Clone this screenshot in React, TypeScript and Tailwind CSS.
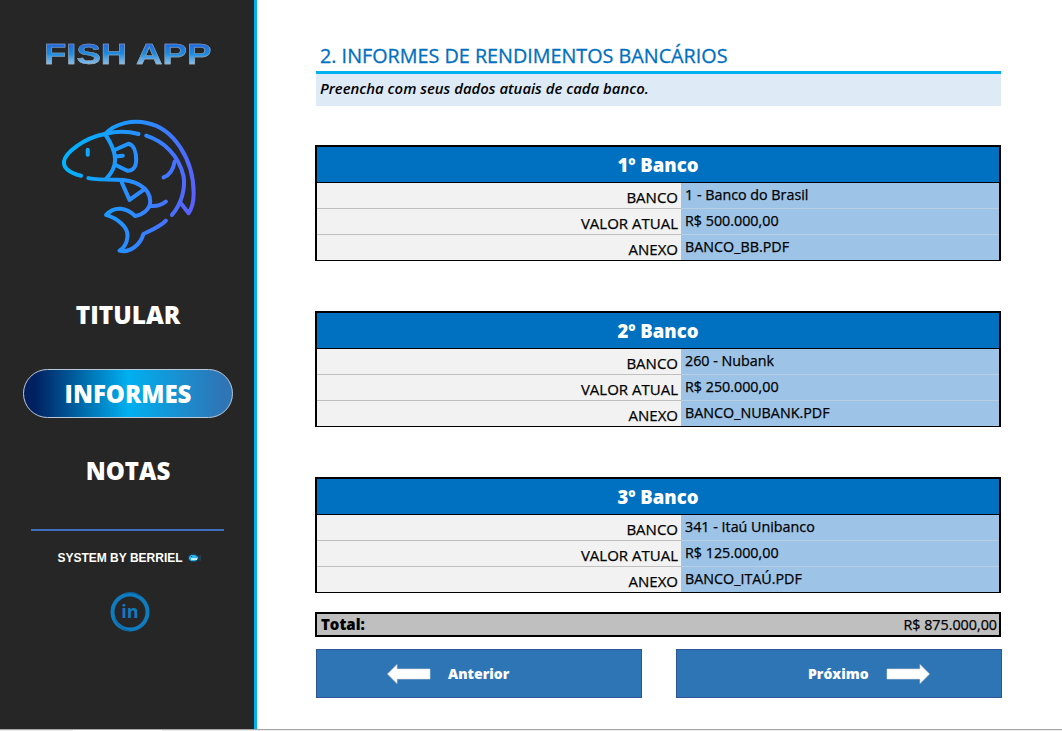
import React from 'react'

const openSans = { fontFamily: '"Open Sans", "Noto Sans", sans-serif' }

const bancos = [
  { titulo: '1º Banco', banco: '1 - Banco do Brasil', valor: 'R$ 500.000,00', anexo: 'BANCO_BB.PDF' },
  { titulo: '2º Banco', banco: '260 - Nubank', valor: 'R$ 250.000,00', anexo: 'BANCO_NUBANK.PDF' },
  { titulo: '3º Banco', banco: '341 - Itaú Unibanco', valor: 'R$ 125.000,00', anexo: 'BANCO_ITAÚ.PDF' },
]

function FishLogo() {
  return (
    <svg viewBox="180 355 410 410" className="w-[137px] h-[137px]" fill="none" stroke="url(#fishGrad)" strokeWidth="12" strokeLinecap="round" strokeLinejoin="round">
      <defs>
        <linearGradient id="fishGrad" gradientUnits="userSpaceOnUse" x1="190" y1="500" x2="590" y2="560">
          <stop offset="0" stopColor="#00b4ff" />
          <stop offset="0.55" stopColor="#2a8cff" />
          <stop offset="1" stopColor="#5a60ff" />
        </linearGradient>
      </defs>
      <path d="M243 528C205 518 190 503 192 485C195 460 250 415 315 403" />
      <path d="M315 403C345 370 400 360 440 370C520 385 580 480 580 580C580 605 575 625 565 640L540 608" />
      <path d="M315 403C345 395 385 395 415 403" />
      <path d="M438 408C490 425 535 465 550 530C555 565 545 610 515 645" />
      <path d="M490 533C510 525 520 505 523 485" />
      <path d="M315 403C330 425 345 455 345 480C345 500 335 520 318 537" />
      <path d="M265 535C290 540 320 540 350 540C400 540 450 560 450 605C450 630 425 645 405 648C380 625 345 615 318 645C350 655 385 680 382 710C380 730 370 745 358 752C390 760 420 735 430 702C450 692 480 680 497 662" />
      <path d="M345 450L385 432C400 435 408 455 408 480C408 505 395 515 380 512L345 495" />
      <path d="M345 470L368 468" />
      <path d="M263 450L263 465" />
      <path d="M365 548L388 600L430 570" />
      <path d="M450 618C470 620 485 615 497 605" />
    </svg>
  )
}

function TinyFish() {
  return (
    <svg viewBox="0 0 14 12" className="w-[14px] h-[12px] shrink-0">
      <path d="M4 2L8 1L9 3L12 4L14 3V9L12 8L9 10H4L1 8V4Z" fill="#1f3f55" />
      <path d="M4 3H8L11 5V7L8 9H4L2 7V5Z" fill="#29b6f0" />
      <rect x="4" y="6" width="6" height="2" fill="#c5ecfc" />
      <rect x="4" y="4" width="1" height="1" fill="#10374d" />
    </svg>
  )
}

function LinkedinMark() {
  return (
    <svg viewBox="0 0 42 42" className="w-[42px] h-[42px]" fill="none" stroke="#0f7cc0">
      <circle cx="21" cy="21" r="17.5" strokeWidth="4" />
      <path d="M6 27C8 34 14 39 21 40" strokeWidth="1" stroke="#0b5f96" />
      <path d="M16 2.5C21 1 27 2 31 5" strokeWidth="1.2" stroke="#0b5f96" />
      <text x="21" y="27" textAnchor="middle" fill="#0f7cc0" stroke="none" fontSize="18" fontWeight="700" fontFamily='"Open Sans", sans-serif'>in</text>
    </svg>
  )
}

function Arrow({ dir }: { dir: 'left' | 'right' }) {
  return (
    <svg viewBox="0 0 44 20" className={`w-[44px] h-[20px] ${dir === 'right' ? '-scale-x-100' : ''}`}>
      <path d="M0.5 10L10 0.5V5H43V15H10V19.5Z" fill="#ffffff" stroke="#d9d9d9" strokeWidth="0.6" />
    </svg>
  )
}

function Linha({ label, valor, last }: { label: string; valor: string; last?: boolean }) {
  return (
    <div className={`flex ${last ? 'h-[25px]' : 'h-[26px]'}`}>
      <div className={`w-[364px] bg-[#f2f2f2] pt-[3px] text-right pr-[3px] text-[15px] leading-[22px] [-webkit-text-stroke:0.25px_#000] text-black ${last ? '' : 'border-b border-[#bfbfbf]'}`}>
        {label}
      </div>
      <div className={`flex-1 bg-[#9dc3e6] pt-[1px] pl-[4px] text-[14.3px] leading-[22px] [-webkit-text-stroke:0.25px_#000] text-black ${last ? '' : 'border-b border-[#b8cfe6]'}`}>
        {valor}
      </div>
    </div>
  )
}

function BancoCard({ b }: { b: (typeof bancos)[number] }) {
  return (
    <div className="border-2 border-black h-[116px]">
      <div className="h-[36px] bg-[#0070c0] border-b border-black flex items-center justify-center text-white text-[18.5px] font-extrabold">
        {b.titulo}
      </div>
      <Linha label="BANCO" valor={b.banco} />
      <Linha label="VALOR ATUAL" valor={b.valor} />
      <Linha label="ANEXO" valor={b.anexo} last />
    </div>
  )
}

export default function App() {
  return (
    <div className="w-[1062px] h-[731px] overflow-hidden bg-white flex flex-col" style={openSans}>
      <div className="flex h-[729px]">
        <aside className="w-[257px] shrink-0 bg-[#262626] border-r-[3px] border-[#00b0f0] flex flex-col items-center pl-[2px]">
          <h1
            className="mt-[38px] h-[32px] text-[30px] leading-[32px] font-bold scale-x-[1.22] bg-gradient-to-b from-[#2a4fe0] via-[#1a8de0] to-[#b5dcf2] bg-clip-text text-transparent [-webkit-text-stroke:0.5px_#a0a0a0]"
            style={{ fontFamily: '"Liberation Sans", Arial, sans-serif' }}
          >
            FISH APP
          </h1>
          <div className="mt-[48px]"><FishLogo /></div>
          <div className="mt-[43px] h-[33px] text-white text-[24.5px] leading-[33px] font-extrabold">TITULAR</div>
          <div className="mt-[38px] w-[210px] h-[49px] rounded-full border border-[#b9c9dc] flex items-center justify-center text-white text-[24px] font-extrabold bg-[linear-gradient(90deg,#002060_5%,#00b0f0_50%,#2e75b6_95%)]">
            INFORMES
          </div>
          <div className="mt-[36px] h-[33px] text-white text-[24px] leading-[33px] font-extrabold">NOTAS</div>
          <div className="mt-[42px] mr-[2px] w-[193px] h-[2px] bg-[#3f6fc0]" />
          <div className="mt-[20px] ml-[2px] h-[14px] flex items-center gap-[4px] text-white text-[12px] font-bold" style={{ fontFamily: '"Liberation Sans", Arial, sans-serif' }}>
            SYSTEM BY BERRIEL <TinyFish />
          </div>
          <div className="mt-[26px] ml-[3px]"><LinkedinMark /></div>
        </aside>

        <main className="w-[686px] ml-[58px]">
          <div className="pt-[42px] h-[71px] pl-[5px] text-[19.75px] leading-[28px] [-webkit-text-stroke:0.3px_#0070c0] text-[#0070c0]">
            2. INFORMES DE RENDIMENTOS BANCÁRIOS
          </div>
          <div className="h-[3px] ml-[1px] bg-[#00b0f0]" />
          <div className="h-[32px] ml-[1px] bg-[#deeaf6] pl-[4px] pb-[4px] flex items-center text-[14.9px] font-semibold italic text-black">
            Preencha com seus dados atuais de cada banco.
          </div>
          <div className="mt-[39px] flex flex-col gap-[50px]">
            {bancos.map(b => <BancoCard key={b.titulo} b={b} />)}
          </div>
          <div className="mt-[19px] h-[25px] border-2 border-black bg-[#bfbfbf] flex items-center justify-between pl-[4px] pr-[2px] text-[14.3px] text-black">
            <span className="font-extrabold text-[15px]">Total:</span>
            <span className="[-webkit-text-stroke:0.25px_#000]">R$ 875.000,00</span>
          </div>
          <div className="mt-[12px] ml-[1px] w-[686px] flex justify-between">
            <div className="w-[326px] h-[49px] bg-[#2e75b6] border border-[#2f5597] flex items-center text-white text-[14px] font-extrabold pl-[70px] gap-[17px]">
              <Arrow dir="left" />
              <span>Anterior</span>
            </div>
            <div className="w-[326px] h-[49px] bg-[#2e75b6] border border-[#2f5597] flex items-center text-white text-[14px] font-extrabold pl-[131px] gap-[17px]">
              <span>Próximo</span>
              <Arrow dir="right" />
            </div>
          </div>
        </main>
      </div>
      <div className="h-[2px] flex border-t border-[#a6a6a6] bg-[#ececec]">
        <div className="ml-[73px] w-[89px] bg-white" />
      </div>
    </div>
  )
}
